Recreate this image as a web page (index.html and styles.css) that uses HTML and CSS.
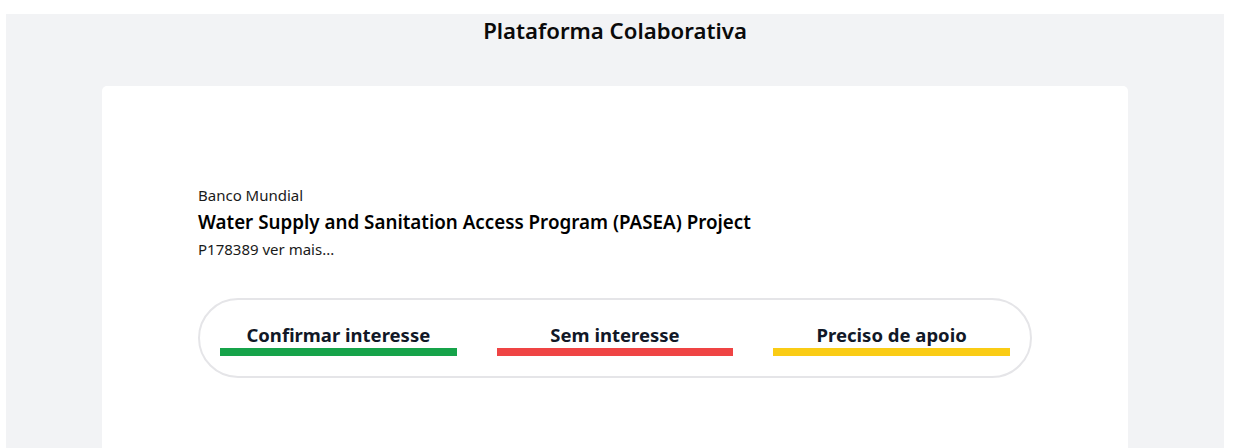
FILE: index.html
```html
<!DOCTYPE html>
<html lang="pt">
<head>
<meta charset="utf-8">
<title>Plataforma Colaborativa</title>
<link rel="stylesheet" href="styles.css">
</head>
<body>
<div class="page">
  <main class="shell">
    <h1 class="app-title">Plataforma Colaborativa</h1>
    <section class="card">
      <div class="project">
        <p class="org">Banco Mundial</p>
        <h2 class="project-name">Water Supply and Sanitation Access Program (PASEA) Project</h2>
        <p class="project-id">P178389 ver mais...</p>
      </div>
      <div class="actions">
        <button class="action action-green"><span class="label">Confirmar interesse</span><span class="bar"></span></button>
        <button class="action action-red"><span class="label">Sem interesse</span><span class="bar"></span></button>
        <button class="action action-yellow"><span class="label">Preciso de apoio</span><span class="bar"></span></button>
      </div>
    </section>
  </main>
</div>
</body>
</html>
```

FILE: styles.css
```css
* { box-sizing: border-box; }
html, body { margin: 0; padding: 0; background: #ffffff; height: 100%; }
body { font-family: "Noto Sans", "Open Sans", sans-serif; color: #111; overflow: hidden; }
.page { padding: 14px 12px 0 6px; height: 100%; }
.shell {
  background: #f2f3f5;
  height: 100%;
  padding: 0 96px;
  display: flex;
  flex-direction: column;
  align-items: stretch;
}
.app-title {
  margin: 0;
  text-align: center;
  font-size: 22.2px;
  line-height: 34px;
  font-weight: 600;
  color: #0a0a0a;
}
.card {
  margin-top: 38px;
  background: #fff;
  border-radius: 5px 5px 0 0;
  flex: 1;
  padding: 99px 96px 0 96px;
}
.project p, .project h2 { margin: 0; }
.org { font-size: 15px; line-height: 20px; color: #1a1a1a; }
.project-name { font-size: 18.8px; line-height: 34px; font-weight: 600; color: #000; }
.project-id { font-size: 15px; line-height: 20px; color: #1a1a1a; }
.actions {
  margin-top: 39px;
  width: 834px;
  height: 80px;
  border: 2px solid #e5e5e8;
  border-radius: 40px;
  padding: 20px 20px;
  display: flex;
  gap: 40px;
}
.action {
  flex: 1;
  border: 0;
  background: none;
  padding: 0;
  margin: 0;
  font: inherit;
  display: flex;
  flex-direction: column;
  align-items: stretch;
  cursor: pointer;
}
.label {
  font-size: 18.5px;
  line-height: 26px;
  font-weight: 700;
  color: #111827;
  text-align: center;
  margin-top: 2px;
}
.bar { display: block; height: 8px; }
.action-green .bar { background: #16a34a; }
.action-red .bar { background: #ef4444; }
.action-yellow .bar { background: #facc15; }
```
